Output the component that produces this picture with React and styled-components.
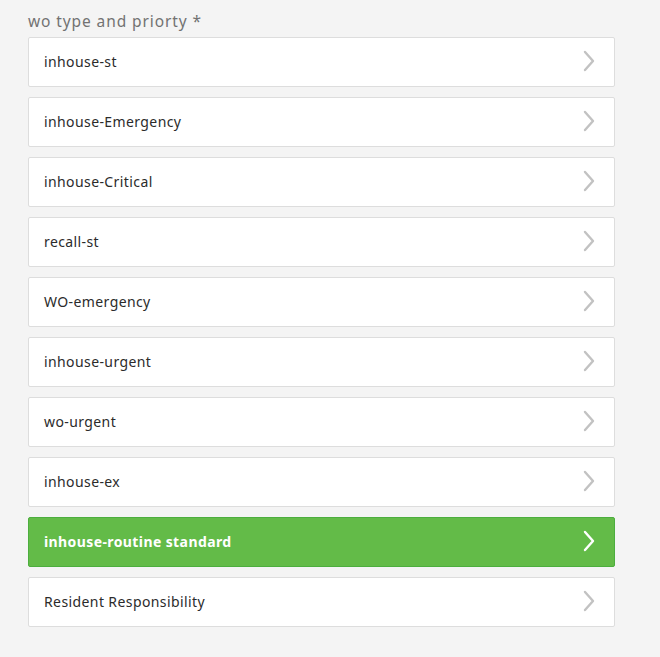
import React from "react";
import styled, { createGlobalStyle } from "styled-components";

const Global = createGlobalStyle`
  html, body { margin: 0; padding: 0; background: #f4f4f4; }
  body { font-family: "Noto Sans", "Open Sans", sans-serif; }
`;

const Page = styled.div`
  width: 587px;
  padding: 11px 0 30px 28px;
  box-sizing: content-box;
`;

const Label = styled.div`
  font-size: 15.5px;
  line-height: 20px;
  color: #727272;
  letter-spacing: 0.9px;
  margin-bottom: 6px;
`;

const List = styled.div`
  display: flex;
  flex-direction: column;
  gap: 10px;
`;

const Row = styled.div`
  display: flex;
  align-items: center;
  justify-content: space-between;
  height: 50px;
  box-sizing: border-box;
  padding: 0 18px 2px 15px;
  border: 1px solid ${(p) => (p.$active ? "#4cae3e" : "#dddddd")};
  border-radius: 2px;
  background: ${(p) => (p.$active ? "#63bb48" : "#ffffff")};
  color: ${(p) => (p.$active ? "#ffffff" : "#2b2b2b")};
  font-size: 14px;
  letter-spacing: 0.4px;
  font-weight: ${(p) => (p.$active ? 700 : 400)};
`;

const Chevron = ({ active }) => (
  <svg width="14" height="22" viewBox="0 0 14 22">
    <path
      d="M3 2 L11 11 L3 20"
      fill="none"
      stroke={active ? "#ffffff" : "#c2c2c2"}
      strokeWidth="2.4"
      strokeLinecap="round"
      strokeLinejoin="round"
    />
  </svg>
);

const items = [
  "inhouse-st",
  "inhouse-Emergency",
  "inhouse-Critical",
  "recall-st",
  "WO-emergency",
  "inhouse-urgent",
  "wo-urgent",
  "inhouse-ex",
  "inhouse-routine standard",
  "Resident Responsibility",
];

export default function App() {
  return (
    <>
      <Global />
      <Page>
        <Label>wo type and priorty *</Label>
        <List>
          {items.map((it, i) => {
            const active = i === 8;
            return (
              <Row key={it} $active={active}>
                <span>{it}</span>
                <Chevron active={active} />
              </Row>
            );
          })}
        </List>
      </Page>
    </>
  );
}
